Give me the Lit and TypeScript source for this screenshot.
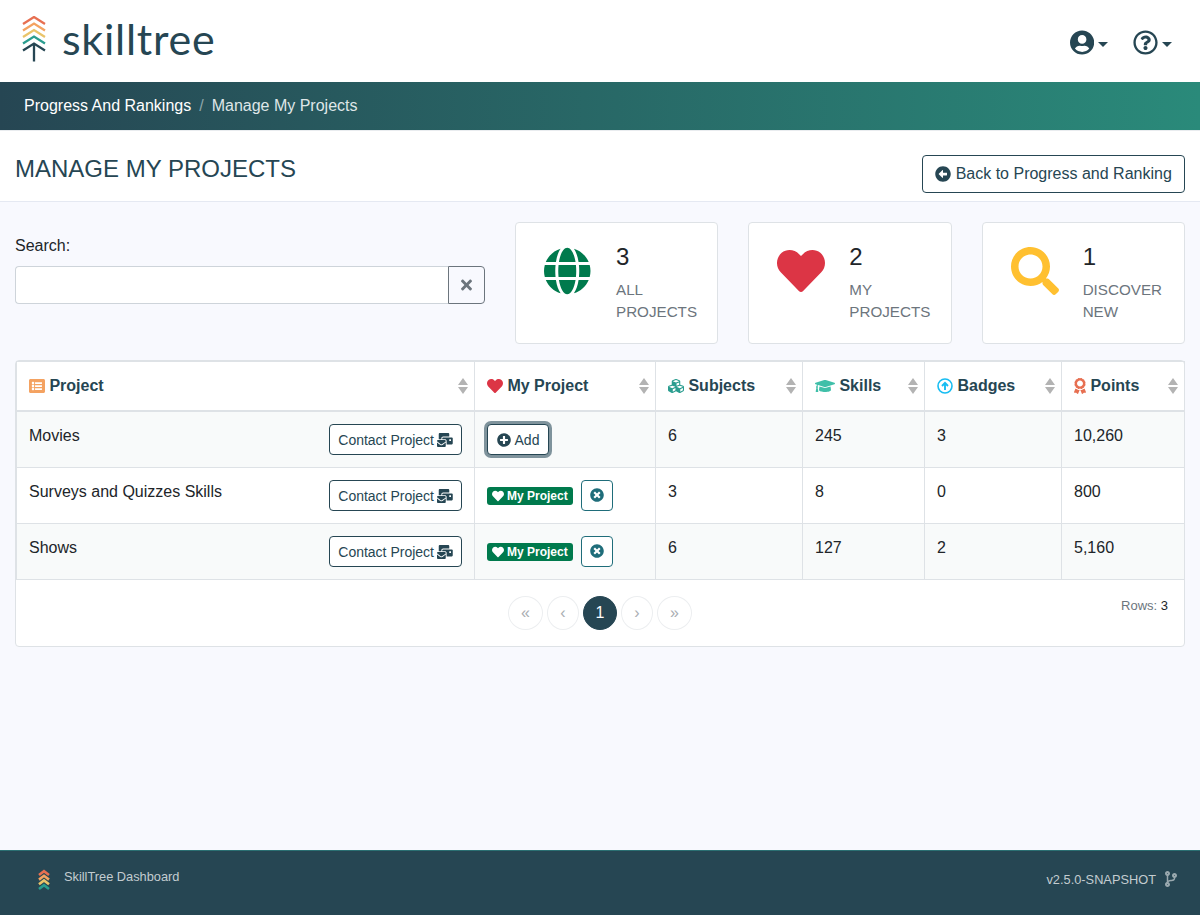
import { LitElement, html, css, svg } from "lit";
import { customElement } from "lit/decorators.js";

const P = {
  heart: "M462.3 62.6C407.5 15.9 326 24.3 275.7 76.2L256 96.5l-19.7-20.3C186.1 24.3 104.5 15.9 49.7 62.6c-62.8 53.6-66.1 149.8-9.9 207.9l193.5 199.8c12.5 12.9 32.8 12.9 45.3 0l193.5-199.8c56.3-58.1 53-154.3-9.8-207.9z",
  search: "M505 442.7L405.3 343c-4.5-4.5-10.6-7-17-7H372c27.6-35.3 44-79.7 44-128C416 93.1 322.9 0 208 0S0 93.1 0 208s93.1 208 208 208c48.3 0 92.7-16.4 128-44v16.3c0 6.4 2.5 12.5 7 17l99.7 99.7c9.4 9.4 24.6 9.4 33.9 0l28.3-28.3c9.4-9.4 9.4-24.6.1-34zM208 336c-70.7 0-128-57.2-128-128 0-70.7 57.2-128 128-128 70.7 0 128 57.2 128 128 0 70.7-57.2 128-128 128z",
  globe: "M336.5 160C322 70.7 287.8 8 248 8s-74 62.7-88.5 152h177zM152 256c0 22.2 1.2 43.5 3.3 64h185.3c2.1-20.5 3.3-41.8 3.3-64s-1.2-43.5-3.3-64H155.3c-2.1 20.5-3.3 41.8-3.3 64zm324.7-96c-28.6-67.9-86.5-120.4-158-141.6 24.4 33.8 41.2 84.7 50 141.6h108zM177.2 18.4C105.8 39.6 47.8 92.1 19.3 160h108c8.7-56.9 25.5-107.8 49.9-141.6zM487.4 192H372.7c2.1 21 3.3 42.5 3.3 64s-1.2 43-3.3 64h114.6c5.5-20.5 8.6-41.8 8.6-64s-3.1-43.5-8.5-64zM120 256c0-21.5 1.2-43 3.3-64H8.6C3.2 212.5 0 233.8 0 256s3.2 43.5 8.6 64h114.6c-2-21-3.2-42.5-3.2-64zm39.5 96c14.5 89.3 48.7 152 88.5 152s74-62.7 88.5-152h-177zm159.3 141.6c71.4-21.2 129.4-73.7 158-141.6h-108c-8.8 56.9-25.6 107.8-50 141.6zM19.3 352c28.6 67.9 86.5 120.4 158 141.6-24.4-33.8-41.2-84.7-50-141.6h-108z",
  back: "M256 504C119 504 8 393 8 256S119 8 256 8s248 111 248 248-111 248-248 248zm116-292H256v-70.9c0-10.7-13-16.1-20.5-8.5L121.2 247.5c-4.7 4.7-4.7 12.2 0 16.9l114.3 114.9c7.6 7.6 20.5 2.2 20.5-8.5V300h116c6.6 0 12-5.4 12-12v-64c0-6.6-5.4-12-12-12z",
  user: "M248 8C111 8 0 119 0 256s111 248 248 248 248-111 248-248S385 8 248 8zm0 96c48.6 0 88 39.4 88 88s-39.4 88-88 88-88-39.4-88-88 39.4-88 88-88zm0 344c-58.7 0-111.3-26.6-146.5-68.2 18.8-35.4 55.6-59.8 98.5-59.8 2.4 0 4.8.4 7.1 1.1 13 4.2 26.6 6.9 40.9 6.9 14.3 0 28-2.7 40.9-6.9 2.3-.7 4.7-1.1 7.1-1.1 42.9 0 79.7 24.4 98.5 59.8C359.3 421.4 306.7 448 248 448z",
  help: "M256 8C119.043 8 8 119.083 8 256c0 136.997 111.043 248 248 248s248-111.003 248-248C504 119.083 392.957 8 256 8zm0 448c-110.532 0-200-89.431-200-200 0-110.495 89.472-200 200-200 110.491 0 200 89.471 200 200 0 110.53-89.431 200-200 200zm107.244-255.2c0 67.052-72.421 68.084-72.421 92.863V300c0 6.627-5.373 12-12 12h-45.647c-6.627 0-12-5.373-12-12v-8.659c0-35.745 27.1-50.034 47.579-61.516 17.561-9.845 28.324-16.541 28.324-29.579 0-17.246-21.999-28.693-39.784-28.693-23.189 0-33.894 10.977-48.942 29.969-4.057 5.12-11.46 6.071-16.666 2.124l-27.824-21.098c-5.107-3.872-6.251-11.066-2.644-16.363C184.846 131.491 214.94 112 261.794 112c49.071 0 101.45 38.304 101.45 88.8zM298 368c0 23.159-18.841 42-42 42s-42-18.841-42-42 18.841-42 42-42 42 18.841 42 42z",
  timesCircle: "M256 8C119 8 8 119 8 256s111 248 248 248 248-111 248-248S393 8 256 8zm121.6 313.1c4.7 4.7 4.7 12.3 0 17L338 377.6c-4.7 4.7-12.3 4.7-17 0L256 312l-65.1 65.6c-4.7 4.7-12.3 4.7-17 0L134.4 338c-4.7-4.7-4.7-12.3 0-17l65.6-65-65.6-65.1c-4.7-4.7-4.7-12.3 0-17l39.6-39.6c4.7-4.7 12.3-4.7 17 0l65 65.7 65.1-65.6c4.7-4.7 12.3-4.7 17 0l39.6 39.6c4.7 4.7 4.7 12.3 0 17L312 256l65.6 65.1z",
  plus: "M256 8C119 8 8 119 8 256s111 248 248 248 248-111 248-248S393 8 256 8zm144 276c0 6.6-5.4 12-12 12h-92v92c0 6.6-5.4 12-12 12h-56c-6.6 0-12-5.4-12-12v-92h-92c-6.6 0-12-5.4-12-12v-56c0-6.6 5.4-12 12-12h92v-92c0-6.6 5.4-12 12-12h56c6.6 0 12 5.4 12 12v92h92c6.6 0 12 5.4 12 12v56z",
  times: "M242.72 256l100.07-100.07c12.28-12.28 12.28-32.19 0-44.48l-22.24-22.24c-12.28-12.28-32.19-12.28-44.48 0L176 189.28 75.93 89.21c-12.28-12.28-32.19-12.28-44.48 0L9.21 111.45c-12.28 12.28-12.28 32.19 0 44.48L109.28 256 9.21 356.07c-12.28 12.28-12.28 32.19 0 44.48l22.24 22.24c12.28 12.28 32.2 12.28 44.48 0L176 322.72l100.07 100.07c12.28 12.28 32.2 12.28 44.48 0l22.24-22.24c12.28-12.28 12.28-32.19 0-44.48L242.72 256z",
  list: "M464 480H48c-26.51 0-48-21.49-48-48V80c0-26.51 21.49-48 48-48h416c26.51 0 48 21.49 48 48v352c0 26.51-21.49 48-48 48zM128 120c-22.091 0-40 17.909-40 40s17.909 40 40 40 40-17.909 40-40-17.909-40-40-40zm0 96c-22.091 0-40 17.909-40 40s17.909 40 40 40 40-17.909 40-40-17.909-40-40-40zm0 96c-22.091 0-40 17.909-40 40s17.909 40 40 40 40-17.909 40-40-17.909-40-40-40zm288-136v-32c0-6.627-5.373-12-12-12H204c-6.627 0-12 5.373-12 12v32c0 6.627 5.373 12 12 12h200c6.627 0 12-5.373 12-12zm0 96v-32c0-6.627-5.373-12-12-12H204c-6.627 0-12 5.373-12 12v32c0 6.627 5.373 12 12 12h200c6.627 0 12-5.373 12-12zm0 96v-32c0-6.627-5.373-12-12-12H204c-6.627 0-12 5.373-12 12v32c0 6.627 5.373 12 12 12h200c6.627 0 12-5.373 12-12z",
  cap: "M622.34 153.2L343.4 67.5c-15.2-4.67-31.6-4.67-46.79 0L17.66 153.2c-23.54 7.23-23.54 38.36 0 45.59l48.63 14.94c-10.67 13.19-17.23 29.28-17.88 46.9C38.78 266.15 32 276.11 32 288c0 10.78 5.68 19.85 13.86 25.65L20.33 428.53C18.11 438.52 25.71 448 35.94 448h56.11c10.24 0 17.84-9.48 15.62-19.47L82.14 313.65C90.32 307.85 96 298.78 96 288c0-11.57-6.47-21.25-15.66-26.87.76-15.02 8.44-28.3 20.69-36.72L296.6 284.5c9.06 2.78 26.44 6.25 46.79 0l278.95-85.7c23.55-7.24 23.55-38.36 0-45.6zM352.79 315.09c-28.53 8.76-52.84 3.92-65.59 0l-145.02-44.55L128 384c0 35.35 85.96 64 192 64s192-28.65 192-64l-14.18-113.47-145.03 44.56z",
  mail: "M160 448c-25.6 0-51.2-22.4-64-32-64-44.8-83.2-60.8-96-70.4V480c0 17.67 14.33 32 32 32h256c17.67 0 32-14.33 32-32V345.6c-12.8 9.6-32 25.6-96 70.4-12.8 9.6-38.4 32-64 32zm128-192H32c-17.67 0-32 14.33-32 32v16c25.6 19.2 22.4 19.2 115.2 86.4 9.6 6.4 28.8 25.6 44.8 25.6s35.2-19.2 44.8-22.4c92.8-67.2 89.6-67.2 115.2-86.4V288c0-17.67-14.33-32-32-32zm256-96H224c-17.67 0-32 14.33-32 32v32h96c33.21 0 60.59 25.42 63.71 57.82l.29-.22V416h192c17.67 0 32-14.33 32-32V192c0-17.67-14.33-32-32-32zm-32 128h-64v-64h64v64zm-352-96c0-35.29 28.71-64 64-64h224V32c0-17.67-14.33-32-32-32H96C78.33 0 64 14.33 64 32v192h96v-32z",
  cubes: "M488.6 250.2L392 214V105.5c0-15-9.3-28.4-23.4-33.7l-100-37.5c-8.1-3.1-17.1-3.1-25.3 0l-100 37.5c-14.1 5.3-23.4 18.7-23.4 33.7V214l-96.6 36.2C9.3 255.5 0 268.9 0 283.9V394c0 13.6 7.7 26.1 19.9 32.2l100 50c10.1 5.1 22.1 5.1 32.2 0l103.9-52 103.9 52c10.1 5.1 22.1 5.1 32.2 0l100-50c12.2-6.1 19.9-18.6 19.9-32.2V283.9c0-15-9.3-28.4-23.4-33.7zM358 214.8l-85 31.9v-68.2l85-37v73.3zM154 104.1l102-38.2 102 38.2v.6l-102 41.4-102-41.4v-.6zm84 291.1l-85 42.5v-79.1l85-38.8v75.4zm0-112l-102 41.4-102-41.4v-.6l102-38.2 102 38.2v.6zm240 112l-85 42.5v-79.1l85-38.8v75.4zm0-112l-102 41.4-102-41.4v-.6l102-38.2 102 38.2v.6z",
  award: "M97.12 362.63c-8.69-8.69-4.16-6.24-25.12-11.85-9.51-2.55-17.87-7.45-25.43-13.32L1.2 448.7c-4.39 10.77 3.81 22.47 15.43 22.03l52.69-2.01L105.56 507c8 8.44 22.04 5.81 26.43-4.96l52.05-127.62c-10.84 6.04-22.87 9.58-35.31 9.58-19.5 0-37.82-7.59-51.61-21.37zM382.8 448.7l-45.37-111.24c-7.56 5.88-15.92 10.77-25.43 13.32-21.07 5.64-16.45 3.18-25.12 11.85-13.79 13.78-32.12 21.37-51.62 21.37-12.44 0-24.47-3.55-35.31-9.58L252 502.04c4.39 10.77 18.44 13.4 26.43 4.96l36.25-38.28 52.69 2.01c11.62.44 19.82-11.27 15.43-22.03zM263 340c15.28-15.55 17.03-14.21 38.79-20.14 13.89-3.79 24.75-14.84 28.47-28.98 7.48-28.4 5.54-24.97 25.95-45.75 10.17-10.35 14.14-25.44 10.42-39.58-7.47-28.38-7.48-24.42 0-52.83 3.72-14.14-.25-29.23-10.42-39.58-20.41-20.78-18.47-17.36-25.95-45.75-3.72-14.14-14.58-25.19-28.47-28.98-27.88-7.61-24.52-5.62-44.95-26.41-10.17-10.35-25-14.4-38.89-10.61-27.87 7.6-23.98 7.61-51.9 0-13.89-3.79-28.72.25-38.89 10.61-20.41 20.78-17.05 18.8-44.94 26.41-13.89 3.79-24.75 14.84-28.47 28.98-7.47 28.39-5.54 24.97-25.95 45.75-10.17 10.35-14.15 25.44-10.42 39.58 7.47 28.36 7.48 24.4 0 52.82-3.72 14.14.25 29.23 10.42 39.59 20.41 20.78 18.47 17.35 25.95 45.75 3.72 14.14 14.58 25.19 28.47 28.98C104.6 325.96 106.27 325 121 340c13.23 13.47 33.84 15.88 49.74 5.82a39.676 39.676 0 0 1 42.53 0c15.89 10.06 36.5 7.65 49.73-5.82zM97.66 175.96c0-53.03 42.24-96.02 94.34-96.02s94.34 42.99 94.34 96.02-42.24 96.02-94.34 96.02-94.34-42.99-94.34-96.02z",
  branch: "M384 144c0-44.2-35.8-80-80-80s-80 35.8-80 80c0 36.4 24.3 67.1 57.5 76.8-.6 16.1-4.2 28.5-11 36.9-15.4 19.2-49.3 22.4-85.2 25.7-28.2 2.6-57.4 5.4-81.3 16.9v-144c32.5-10.2 56-40.5 56-76.3 0-44.2-35.8-80-80-80S0 35.8 0 80c0 35.8 23.5 66.1 56 76.3v199.3C23.5 365.9 0 396.2 0 432c0 44.2 35.8 80 80 80s80-35.8 80-80c0-34-21.2-63.1-51.2-74.6 3.1-5.2 7.8-9.8 14.9-13.4 16.2-8.2 40.4-10.4 66.1-12.8 42.2-3.9 90-8.4 118.2-43.4 14-17.4 21.1-39.8 21.6-67.9 31.6-10.8 54.4-40.7 54.4-75.9zM80 64c8.8 0 16 7.2 16 16s-7.2 16-16 16-16-7.2-16-16 7.2-16 16-16zm0 384c-8.8 0-16-7.2-16-16s7.2-16 16-16 16 7.2 16 16-7.2 16-16 16zm224-320c8.8 0 16 7.2 16 16s-7.2 16-16 16-16-7.2-16-16 7.2-16 16-16z",
};

const ic = (d: string, vb: string, cls: string) =>
  html`<svg class="ic ${cls}" viewBox="${vb}" fill="currentColor"><path d="${d}"></path></svg>`;

const logoMark = () => html`<svg class="logo-mark" viewBox="0 0 24 46" fill="none" stroke-width="2.3">
  <path d="M1 8 L12 1 L23 8" stroke="#e76f51"></path>
  <path d="M1 14.5 L12 7.5 L23 14.5" stroke="#f4a261"></path>
  <path d="M1 21 L12 14 L23 21" stroke="#e9c46a"></path>
  <path d="M1 27.5 L12 20.5 L23 27.5" stroke="#2a9d8f"></path>
  <path d="M1 34.5 L12 27.5 L23 34.5 M12 27.5 V45.5" stroke="#264653"></path>
</svg>`;

const footMark = () => html`<svg class="foot-mark" viewBox="0 0 12 23" fill="none" stroke-width="2.6">
  <path d="M1 6 L6 2.2 L11 6" stroke="#e76f51"></path>
  <path d="M1 10.6 L6 6.8 L11 10.6" stroke="#f4a261"></path>
  <path d="M1 15.2 L6 11.4 L11 15.2" stroke="#e9c46a"></path>
  <path d="M1 20 L6 16.2 L11 20" stroke="#2a9d8f"></path>
</svg>`;

const sort = () => html`<svg class="sort" viewBox="0 0 10 16" fill="#b3b3b3"><path d="M5 0 L10 7 H0 Z M0 9 H10 L5 16 Z"></path></svg>`;

const rows = [
  { name: "Movies", mine: false, subjects: "6", skills: "245", badges: "3", points: "10,260" },
  { name: "Surveys and Quizzes Skills", mine: true, subjects: "3", skills: "8", badges: "0", points: "800" },
  { name: "Shows", mine: true, subjects: "6", skills: "127", badges: "2", points: "5,160" },
];

@customElement("app-root")
export class AppRoot extends LitElement {
  static styles = css`
    :host {
      display: flex;
      flex-direction: column;
      min-height: 100vh;
      font-family: "Liberation Sans", Arial, sans-serif;
      font-size: 16px;
      color: #212529;
      background: #f8f9fe;
    }
    * { box-sizing: border-box; }
    .ic { display: inline-block; height: 1em; vertical-align: -0.125em; flex: none; }
    .topbar {
      height: 82px;
      background: #fff;
      display: flex;
      align-items: center;
      justify-content: space-between;
      padding: 0 28px 0 22px;
    }
    .brand { display: flex; align-items: center; gap: 16px; margin-top: -5px; }
    .logo-mark { width: 24px; height: 46px; }
    .logo-text {
      font-family: Lato, "Open Sans", sans-serif;
      font-size: 43px;
      line-height: 46px;
      font-weight: 400;
      letter-spacing: 0.75px;
      color: #264653;
    }
    .top-actions { display: flex; align-items: center; gap: 25px; color: #264653; margin-top: 3px; }
    .dd { display: flex; align-items: center; gap: 4px; }
    .dd .ic { font-size: 25px; }
    .caret { width: 0; height: 0; border: 5px solid transparent; border-top-color: #264653; border-bottom: 0; margin-top: 3px; }
    .crumbs {
      height: 49px;
      background: linear-gradient(90deg, #264653 0%, #2a8a7a 100%);
      border-bottom: 1px solid #e9ecef;
      display: flex;
      align-items: center;
      padding: 0 24px 1px;
      color: #fff;
    }
    .crumbs .sep { color: #8fa6ab; padding: 0 8px; }
    .crumbs .cur { color: #dfe6e8; }
    .title {
      height: 71px;
      background: #fff;
      border-bottom: 1px solid #e5e9f2;
      display: flex;
      justify-content: space-between;
      padding: 23px 15px 0;
    }
    h1 { margin: 0; font-size: 24px; line-height: 29px; font-weight: 400; color: #264653; }
    .btn {
      display: inline-flex;
      align-items: center;
      background: #fff;
      border: 1px solid #264653;
      border-radius: 4px;
      color: #264653;
      font-family: inherit;
    }
    .back { height: 38px; width: 263px; justify-content: center; font-size: 16px; gap: 4.45px; white-space: nowrap; margin-top: 1px; }
    main { flex: 1; padding: 20px 15px 0; }
    .summary { display: flex; gap: 30px; }
    .search { width: 470px; padding-top: 12px; }
    .search label { display: block; line-height: 24px; margin-bottom: 8px; color: #212529; }
    .input-group { display: flex; height: 38px; }
    .field { flex: 1; background: #fff; border: 1px solid #ced4da; border-right: 0; border-radius: 4px 0 0 4px; }
    .clear {
      width: 37px;
      border: 1px solid #6c757d;
      border-radius: 0 4px 4px 0;
      display: flex;
      align-items: center;
      justify-content: center;
      color: #6c757d;
      font-size: 16px;
    }
    .stat {
      flex: 1;
      height: 122px;
      background: #fff;
      border: 1px solid #dee2e6;
      border-radius: 4px;
      display: flex;
      padding: 19px 0 0 28px;
    }
    .stat-icon { width: 72px; flex: none; padding-top: 5px; font-size: 48px; line-height: 48px; }
    .stat-num { font-size: 24px; line-height: 29px; margin-bottom: 8px; color: #212529; }
    .stat-label { font-size: 15.2px; line-height: 22px; color: #6c757d; width: 90px; }
    .c-green { color: #007a4d; }
    .c-red { color: #dc3545; }
    .c-yellow { color: #ffc030; }
    .panel {
      margin-top: 16px;
      background: #fff;
      border: 1px solid #dee2e6;
      border-radius: 4px;
      height: 287px;
    }
    table { width: 1168px; table-layout: fixed; border-collapse: collapse; }
    th, td { border: 1px solid #dee2e6; padding: 12px; vertical-align: top; line-height: 24px; }
    th {
      height: 49px;
      border-bottom: 2px solid #dee2e6;
      text-align: left;
      color: #264653;
      font-weight: 700;
    }
    th .inner { display: flex; align-items: center; justify-content: space-between; }
    th .lab { display: flex; align-items: center; gap: 4.45px; }
    th .ic { font-size: 16px; }
    .sort { width: 10px; height: 16px; margin-right: -6px; flex: none; }
    td { height: 56px; }
    tr.odd td { background: #f8fafa; }
    .cell-row { display: flex; justify-content: space-between; align-items: flex-start; }
    .cell-mine { display: flex; align-items: center; gap: 8.5px; }
    .sm { height: 31px; font-size: 14px; white-space: nowrap; }
    .contact { width: 133px; justify-content: center; gap: 3px; }
    .contact .ic { font-size: 14px; height: 14px; }
    .add { width: 62px; justify-content: center; gap: 4px; box-shadow: 0 0 0 3px #7f939c; }
    .badge {
      display: inline-flex;
      align-items: center;
      gap: 3px;
      height: 18px;
      margin-top: 1px;
      padding: 0 5px;
      background: #007a4d;
      color: #fff;
      border-radius: 3px;
      font-size: 12px;
      font-weight: 700;
    }
    .badge .ic { font-size: 12px; }
    .remove { width: 32px; justify-content: center; border-color: #1f6d7a; color: #1f6d7a; padding-bottom: 3px; }
    .remove .ic { font-size: 14px; }
    .pager-row { position: relative; display: flex; justify-content: center; padding-top: 16px; }
    .pager { display: flex; gap: 4px; }
    .pg {
      height: 34px;
      min-width: 32px;
      border: 1px solid #eceef0;
      border-radius: 50%;
      display: flex;
      align-items: center;
      justify-content: center;
      color: #a9adb2;
      background: #fff;
    }
    .pg.wide { min-width: 35px; }
    .pg.on { width: 34px; min-width: 34px; background: #264653; border-color: #264653; color: #fff; }
    .count { position: absolute; right: 16px; top: 18px; font-size: 13px; line-height: 16px; color: #6c757d; }
    .count b { font-weight: 400; color: #212529; }
    footer {
      height: 65px;
      background: #264653;
      border-top: 1px solid #2a6f72;
      display: flex;
      justify-content: space-between;
      color: #c3ccd0;
      font-size: 12.8px;
      padding: 0 23px 0 38px;
    }
    .foot-left { display: flex; align-items: flex-start; gap: 14px; padding-top: 18px; }
    .foot-mark { width: 12px; height: 23px; }
    .foot-right { display: flex; gap: 9px; align-items: flex-start; padding-top: 20px; line-height: 16px; }
    .foot-left span { line-height: 16px; }
    .foot-right span { padding-top: 1px; }
    .foot-right .ic { font-size: 16px; color: #9aa9af; }
  `;

  render() {
    return html`
      <header class="topbar">
        <div class="brand">${logoMark()}<span class="logo-text">skilltree</span></div>
        <div class="top-actions">
          <div class="dd">${ic(P.user, "0 0 496 512", "")}<span class="caret"></span></div>
          <div class="dd">${ic(P.help, "0 0 512 512", "")}<span class="caret"></span></div>
        </div>
      </header>
      <nav class="crumbs"><span>Progress And Rankings</span><span class="sep">/</span><span class="cur">Manage My Projects</span></nav>
      <section class="title">
        <h1>MANAGE MY PROJECTS</h1>
        <button class="btn back">${ic(P.back, "0 0 512 512", "")}<span>Back to Progress and Ranking</span></button>
      </section>
      <main>
        <div class="summary">
          <div class="search">
            <label>Search:</label>
            <div class="input-group"><div class="field"></div><div class="clear">${ic(P.times, "0 0 352 512", "")}</div></div>
          </div>
          ${this.stat(ic(P.globe, "0 0 496 512", "c-green"), "3", "ALL PROJECTS")}
          ${this.stat(ic(P.heart, "0 0 512 512", "c-red"), "2", "MY PROJECTS")}
          ${this.stat(ic(P.search, "0 0 512 512", "c-yellow"), "1", "DISCOVER NEW")}
        </div>
        <div class="panel">
          <table>
            <colgroup><col style="width:458px" /><col style="width:181px" /><col style="width:147px" /><col style="width:122px" /><col style="width:137px" /><col style="width:123px" /></colgroup>
            <thead>
              <tr>
                ${this.th(ic(P.list, "0 0 512 512", ""), "#f4a261", "Project")}
                ${this.th(ic(P.heart, "0 0 512 512", ""), "#dc3545", "My Project")}
                ${this.th(ic(P.cubes, "0 0 512 512", ""), "#2a9d8f", "Subjects")}
                ${this.th(ic(P.cap, "0 0 640 512", ""), "#40bfa9", "Skills")}
                ${this.th(svg`<svg class="ic" viewBox="0 0 16 16" fill="none" stroke="currentColor" stroke-width="1.6"><circle cx="8" cy="8" r="7"></circle><path d="M8 12V5.5 M5 8 L8 4.8 L11 8" stroke-width="1.9"></path></svg>`, "#17bdf2", "Badges")}
                ${this.th(ic(P.award, "0 0 384 512", ""), "#e76f51", "Points")}
              </tr>
            </thead>
            <tbody>
              ${rows.map((r, i) => html`
                <tr class="${i % 2 === 0 ? "odd" : ""}">
                  <td><div class="cell-row"><span>${r.name}</span>
                    <button class="btn sm contact"><span>Contact Project</span>${ic(P.mail, "0 0 576 512", "")}</button></div></td>
                  <td>${r.mine
                    ? html`<div class="cell-mine"><span class="badge">${ic(P.heart, "0 0 512 512", "")}My Project</span><button class="btn sm remove">${ic(P.timesCircle, "0 0 512 512", "")}</button></div>`
                    : html`<button class="btn sm add">${ic(P.plus, "0 0 512 512", "")}<span>Add</span></button>`}</td>
                  <td>${r.subjects}</td><td>${r.skills}</td><td>${r.badges}</td><td>${r.points}</td>
                </tr>`)}
            </tbody>
          </table>
          <div class="pager-row">
            <div class="pager">
              <span class="pg wide">«</span><span class="pg">‹</span><span class="pg on">1</span><span class="pg">›</span><span class="pg wide">»</span>
            </div>
            <div class="count">Rows: <b>3</b></div>
          </div>
        </div>
      </main>
      <footer>
        <div class="foot-left">${footMark()}<span>SkillTree Dashboard</span></div>
        <div class="foot-right"><span>v2.5.0-SNAPSHOT</span>${ic(P.branch, "0 0 384 512", "")}</div>
      </footer>
    `;
  }

  stat(icon: unknown, n: string, label: string) {
    return html`<div class="stat"><div class="stat-icon">${icon}</div><div><div class="stat-num">${n}</div><div class="stat-label">${label}</div></div></div>`;
  }

  th(icon: unknown, color: string, label: string) {
    return html`<th><div class="inner"><span class="lab"><span style="color:${color};display:flex">${icon}</span>${label}</span>${sort()}</div></th>`;
  }
}
